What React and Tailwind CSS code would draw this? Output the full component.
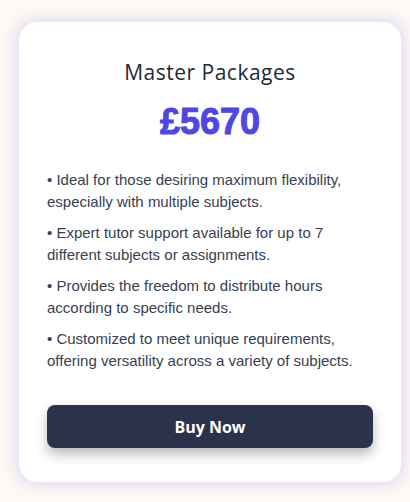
export default function App() {
  const points = [
    'Ideal for those desiring maximum flexibility, especially with multiple subjects.',
    'Expert tutor support available for up to 7 different subjects or assignments.',
    'Provides the freedom to distribute hours according to specific needs.',
    'Customized to meet unique requirements, offering versatility across a variety of subjects.',
  ]

  return (
    <div className="min-h-screen bg-[#fdf9f4] pl-[19px] pt-[22px]">
      <div className="w-[382px] h-[460px] bg-white rounded-[18px] shadow-[0_0_14px_4px_rgba(99,102,241,0.18)] px-[28px] pt-[36px] flex flex-col">
        <h2 className="text-center text-[21px] tracking-[0.5px] text-[#1f2937] font-['Open_Sans',sans-serif] font-medium leading-[28px]">
          Master Packages
        </h2>
        <div className="text-center text-[36px] font-bold text-[#4f46e5] [-webkit-text-stroke:1px_#4f46e5] font-['Liberation_Sans',Arial,sans-serif] leading-[40px] mt-[16px]">
          £5670
        </div>
        <div className="mt-[27px] flex flex-col gap-[9px] font-['Liberation_Sans',Arial,sans-serif] text-[15px] leading-[22px] text-[#374151]">
          {points.map((p) => (
            <p key={p}>• {p}</p>
          ))}
        </div>
        <button
          type="button"
          className="mt-[33px] h-[43px] w-full rounded-[8px] bg-[#2b324b] text-white text-[16px] font-bold font-['Open_Sans',sans-serif] shadow-[0_6px_12px_rgba(15,23,42,0.3)]"
        >
          Buy Now
        </button>
      </div>
    </div>
  )
}
